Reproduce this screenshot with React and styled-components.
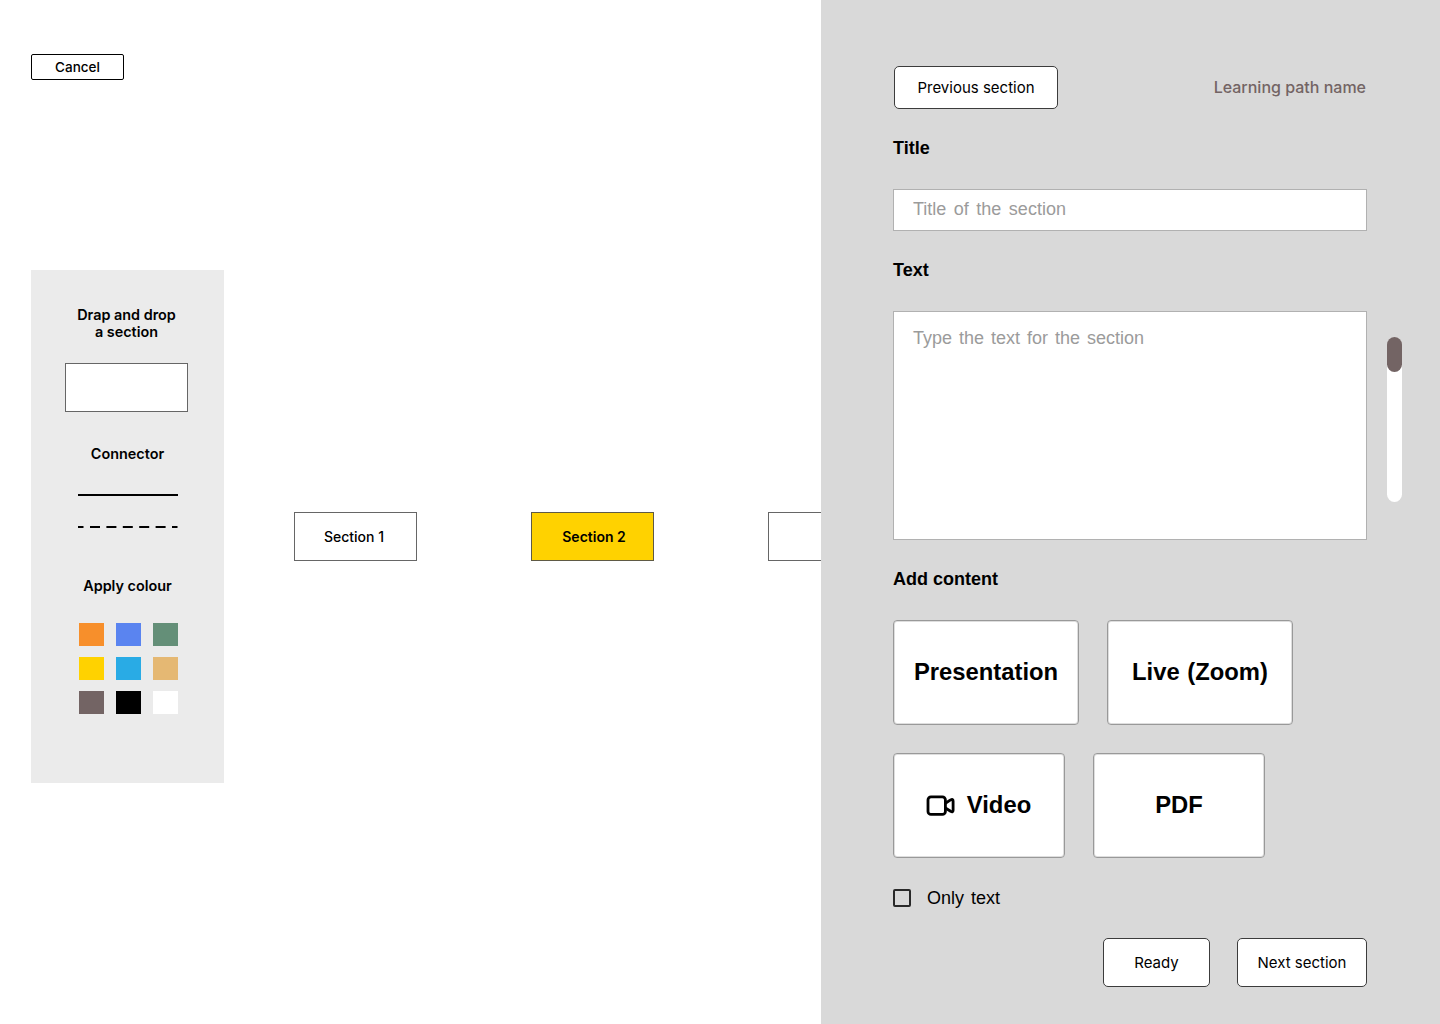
import React from "react";
import styled, { createGlobalStyle } from "styled-components";

const GlobalStyle = createGlobalStyle`
  *, *::before, *::after { box-sizing: border-box; }
  body { margin: 0; background: #fff; color: #000; font-family: Inter, "Liberation Sans", sans-serif; }
  button, input, textarea { font: inherit; color: inherit; margin: 0; }
  h2, h3 { margin: 0; }
`;

const formFont = `"Liberation Sans", Arial, sans-serif`;

const Page = styled.div`
  display: flex;
  width: 1440px;
  height: 1024px;
  overflow: hidden;
`;

const Workspace = styled.main`
  width: 821px;
  padding: 54px 0 0 31px;
  overflow: hidden;
`;

const CancelButton = styled.button`
  display: block;
  width: 93px;
  height: 26px;
  padding: 0;
  border: 1px solid #000;
  border-radius: 2px;
  background: #fff;
  font-size: 13.5px;
  font-weight: 500;
  line-height: 24px;
`;

const Board = styled.div`
  display: flex;
  align-items: flex-start;
  width: max-content;
  margin-top: 190px;
`;

const Toolbox = styled.aside`
  display: flex;
  flex-direction: column;
  align-items: center;
  width: 193px;
  height: 513px;
  padding: 36px 2px 0 0;
  background: #ebebeb;
`;

const ToolHeading = styled.h3`
  font-size: 14.4px;
  font-weight: 600;
  line-height: 17px;
  text-align: center;
  margin-top: ${(p) => p.$top || 0}px;
  padding-left: ${(p) => (p.$top ? 2 : 0)}px;
`;

const SectionBox = styled.div`
  display: flex;
  align-items: center;
  justify-content: center;
  flex: none;
  width: 123px;
  height: 49px;
  border: 1px solid ${(p) => (p.$active ? "#5f5a45" : "#666")};
  background: ${(p) => (p.$active ? "#ffd200" : "#fff")};
  font-size: 14px;
  font-weight: ${(p) => (p.$active ? 600 : 500)};
  padding-left: ${(p) => (p.$active ? 3 : 0)}px;
  padding-right: ${(p) => (p.$active ? 0 : 3)}px;
`;

const DragSource = styled(SectionBox)`
  margin: 23px 0 0;
`;

const Connectors = styled.svg`
  display: block;
  width: 100px;
  height: 34px;
  margin: 32px 0 0 3px;
`;

const Swatches = styled.div`
  display: grid;
  grid-template-columns: repeat(3, 25px);
  gap: 11px 12px;
  margin: 29px 0 0 4px;
`;

const Swatch = styled.span`
  height: 23px;
  background: ${(p) => p.$color};
`;

const Flow = styled.div`
  display: flex;
  gap: 114px;
  margin: 242px 0 0 70px;
`;

const Editor = styled.section`
  width: 619px;
  padding: 66px 38px 0 72px;
  background: #d9d9d9;
`;

const Column = styled.div`
  display: flex;
  flex-direction: column;
  width: 474px;
`;

const Header = styled.header`
  display: flex;
  justify-content: space-between;
  align-items: center;
  padding: 0 1px;
`;

const ActionButton = styled.button`
  width: ${(p) => p.$width}px;
  height: ${(p) => p.$height}px;
  padding: 0 0 1px;
  border: 1px solid #3c3c3c;
  border-radius: 5px;
  background: #fff;
  font-size: 15px;
`;

const PathName = styled.span`
  padding-bottom: 2px;
  font-size: 16px;
  font-weight: 500;
  color: #736464;
`;

const Label = styled.h2`
  margin: 26px 0 28px;
  font-family: ${formFont};
  font-size: 18px;
  font-weight: 700;
  line-height: 26px;
`;

const TitleInput = styled.input`
  width: 474px;
  height: 42px;
  padding: 0 19px 2px;
  border: 1px solid #b1b1b1;
  background: #fff;
  font-family: ${formFont};
  font-size: 18px;
  word-spacing: 2.5px;
  outline: none;
  &::placeholder { color: #9b9b9b; opacity: 1; }
`;

const TextRow = styled.div`
  display: flex;
  align-items: flex-start;
  gap: 20px;
  width: 509px;
`;

const TextInput = styled.textarea`
  display: block;
  width: 474px;
  height: 229px;
  padding: 14px 19px;
  border: 1px solid #b1b1b1;
  background: #fff;
  font-family: ${formFont};
  font-size: 18px;
  word-spacing: 2px;
  line-height: 24px;
  resize: none;
  outline: none;
  &::placeholder { color: #9b9b9b; opacity: 1; }
`;

const ScrollTrack = styled.div`
  width: 15px;
  height: 165px;
  margin-top: 26px;
  border-radius: 8px;
  background: #fff;
`;

const ScrollThumb = styled.div`
  height: 35px;
  border-radius: 8px;
  background: #736464;
`;

const CardRow = styled.div`
  display: flex;
  gap: 28px;
  margin-bottom: 28px;
`;

const ContentCard = styled.button`
  display: flex;
  align-items: center;
  justify-content: center;
  gap: 12px;
  width: ${(p) => p.$width}px;
  height: 105px;
  padding: 0 0 2px;
  border: 1px solid #999;
  border-radius: 4px;
  box-shadow: inset 0 0 0 1px #dedede;
  background: #fff;
  font-family: ${formFont};
  font-size: 23.8px;
  font-weight: 700;
  word-spacing: 1px;
`;

const CameraIcon = styled.svg`
  width: 29px;
  height: 22px;
  margin: 3px 0 0 -1px;
`;

const OnlyText = styled.label`
  display: flex;
  align-items: center;
  gap: 16px;
  height: 24px;
  font-family: ${formFont};
  font-size: 18px;
  word-spacing: 2px;
`;

const CheckBox = styled.span`
  width: 18px;
  height: 18px;
  border: 2px solid #292929;
  border-radius: 2px;
`;

const Footer = styled.footer`
  display: flex;
  justify-content: flex-end;
  gap: 27px;
  margin-top: 28px;
`;

const colours = [
  "#f78f2b", "#5a84f0", "#648f78",
  "#ffd200", "#29abe5", "#e5b873",
  "#736464", "#000000", "#ffffff",
];

export default function App() {
  return (
    <Page>
      <GlobalStyle />
      <Workspace>
        <CancelButton>Cancel</CancelButton>
        <Board>
          <Toolbox>
            <ToolHeading>Drap and drop<br />a section</ToolHeading>
            <DragSource />
            <ToolHeading $top={33}>Connector</ToolHeading>
            <Connectors viewBox="0 0 100 34" stroke="#000" strokeWidth="2">
              <path d="M0 1H100" />
              <path d="M0 33H100" strokeDasharray="5.5 6.5 10 6.4 10 6.4 10 6.4 10 6.4 10 6.4 5.5 20" />
            </Connectors>
            <ToolHeading $top={49}>Apply colour</ToolHeading>
            <Swatches>
              {colours.map((c) => <Swatch key={c} $color={c} />)}
            </Swatches>
          </Toolbox>
          <Flow>
            <SectionBox>Section 1</SectionBox>
            <SectionBox $active>Section 2</SectionBox>
            <SectionBox />
          </Flow>
        </Board>
      </Workspace>
      <Editor>
        <Column>
          <Header>
            <ActionButton $width={164} $height={43}>Previous section</ActionButton>
            <PathName>Learning path name</PathName>
          </Header>
          <Label>Title</Label>
          <TitleInput placeholder="Title of the section" />
          <Label>Text</Label>
          <TextRow>
            <TextInput placeholder="Type the text for the section" />
            <ScrollTrack><ScrollThumb /></ScrollTrack>
          </TextRow>
          <Label>Add content</Label>
          <CardRow>
            <ContentCard $width={186}>Presentation</ContentCard>
            <ContentCard $width={186}>Live (Zoom)</ContentCard>
          </CardRow>
          <CardRow>
            <ContentCard $width={172}>
              <CameraIcon viewBox="0 0 29 22" fill="none" stroke="#000" strokeWidth="2.8" strokeLinejoin="round">
                <rect x="2" y="1.8" width="17.4" height="17.6" rx="3" />
                <path d="M19.4 8.2L24.6 4.9Q27.1 3.6 27.1 6V15.2Q27.1 17.6 24.6 16.3L19.4 13" />
              </CameraIcon>
              Video
            </ContentCard>
            <ContentCard $width={172}>PDF</ContentCard>
          </CardRow>
          <OnlyText><CheckBox />Only text</OnlyText>
          <Footer>
            <ActionButton $width={107} $height={49}>Ready</ActionButton>
            <ActionButton $width={130} $height={49}>Next section</ActionButton>
          </Footer>
        </Column>
      </Editor>
    </Page>
  );
}
